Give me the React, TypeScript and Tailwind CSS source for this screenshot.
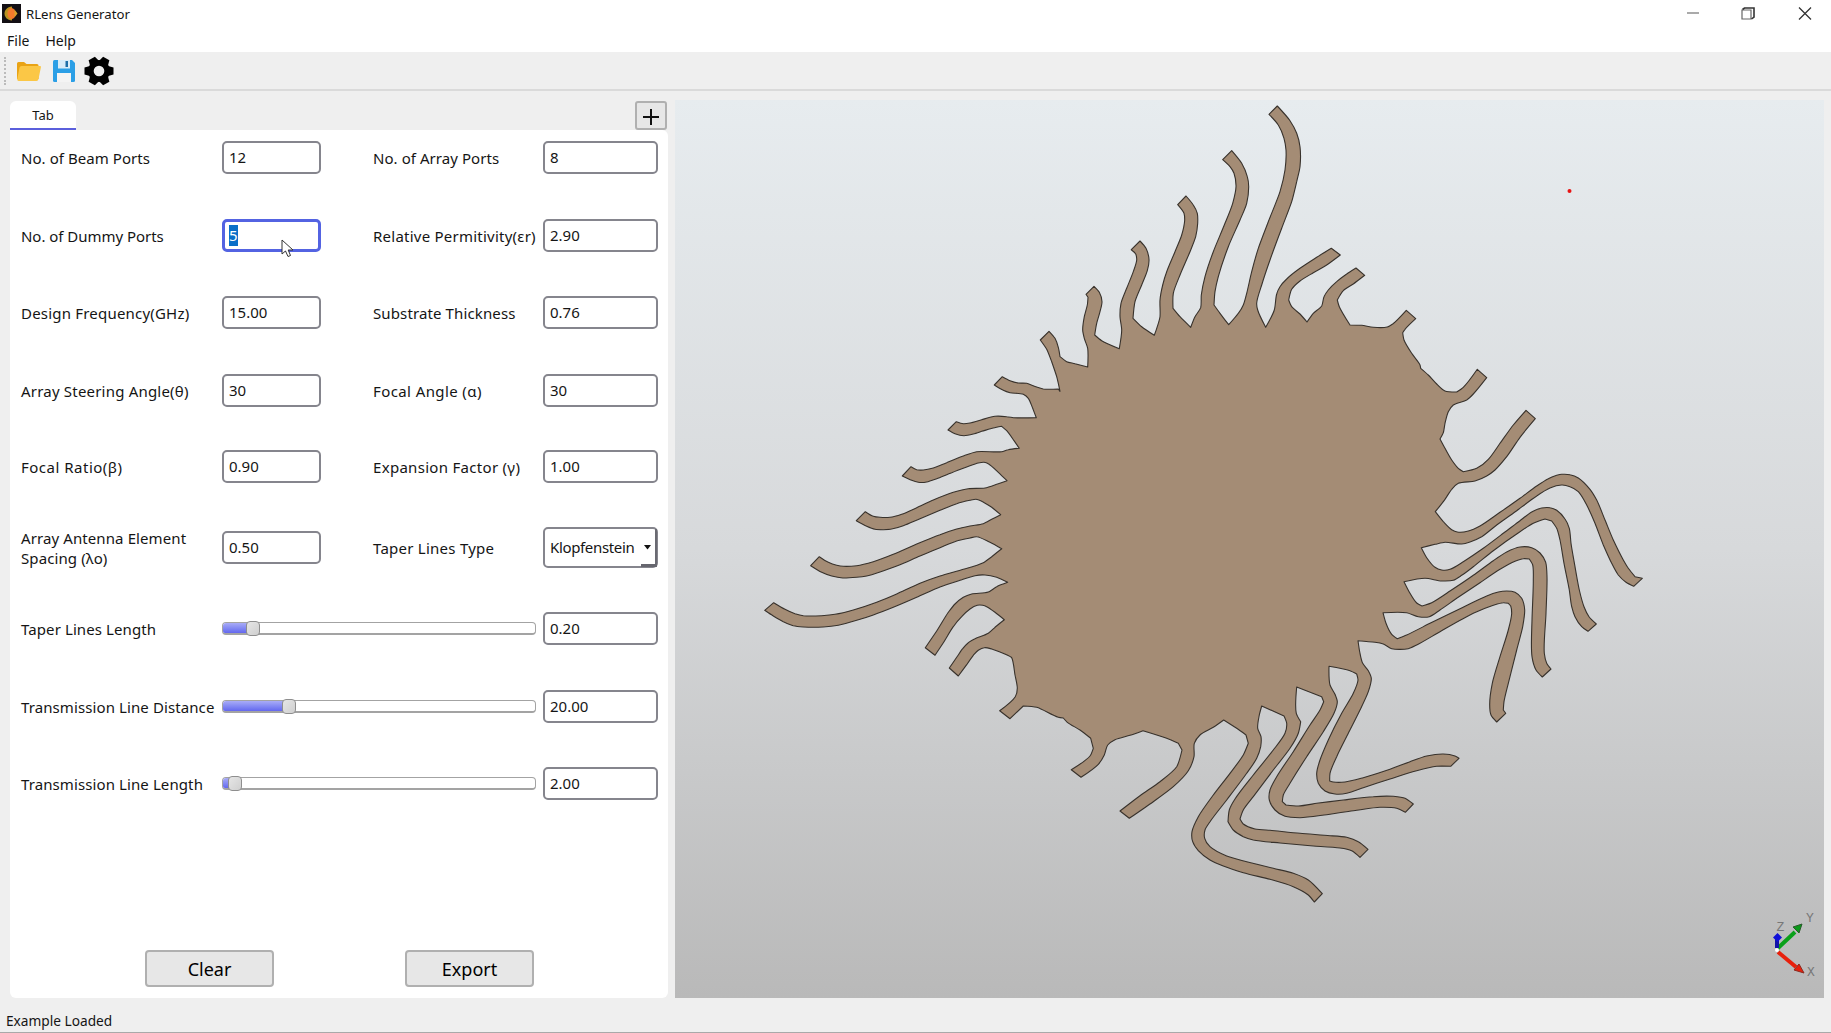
import React from "react";

type Pt = [number, number];

/** Outline chunks of the lens, digitised at a third of a pixel from a local origin. */
const chunks: { origin: Pt; pts: string }[] = [
  {
    origin: [740, 220],
    pts: `814,1312 780,1296 755,1287 733,1283 715,1291 700,1306 680,1334 655,1368 628,1344 650,1312 668,1286 685,1268 705,1256 745,1240 765,1222 793,1199
    765,1177 740,1160 728,1156 712,1156 690,1167 665,1190 640,1220 612,1265 585,1306 556,1283 590,1233 625,1177 645,1152 670,1132 695,1122 745,1116 770,1100 803,1087
    770,1072 735,1065 705,1067 660,1081 600,1101 530,1132 460,1162 400,1185 350,1201 295,1216 250,1221 190,1221 160,1217 130,1205 100,1188 74,1171 101,1148
    135,1168 165,1181 190,1187 245,1187 285,1183 340,1170 410,1147 470,1122 540,1090 600,1068 670,1048 730,1028 755,1010 785,986
    750,967 710,950 690,954 650,963 600,983 540,1008 480,1034 420,1056 380,1068 350,1072 308,1074 275,1068 245,1057 212,1037 238,1010
    265,1027 290,1036 310,1039 350,1037 400,1025 460,1003 530,972 600,944 650,927 690,918 730,911 755,898 782,884
    755,862 722,842 708,838 690,841 650,851 600,871 540,896 490,917 455,927 430,929 405,928 380,919 349,902 376,875
    400,889 420,892 450,892 485,883 530,863 580,840 640,817 685,806 735,804 770,793 801,782
    775,757 745,731 732,727 715,729 680,741 635,758 590,776 560,786 535,787 515,781 487,768 513,740
    530,749 550,750 580,744 620,728 670,708 710,695 785,695 805,689 838,685
    822,662 800,632 785,619 760,624 725,634 700,642 672,647 645,641 624,630 649,605
    670,611 690,609 725,599 765,589 800,590 820,593 889,593
    878,565 865,535 850,523 810,518 790,511 763,495 787,470 810,482 835,489 860,490 890,501 910,507 955,507 960,514
    950,470 935,425 920,388 901,360 927,334 945,355 955,382 960,410 980,425 1005,431 1043,441
    1043,385 1033,355 1028,330 1033,290 1042,255 1044,232 1038,223 1062,199 1078,217 1086,245 1080,275 1070,310 1064,345 1085,362 1138,386
    1145,330 1140,290 1143,250 1160,205 1180,155 1190,120 1187,102 1174,89 1200,63 1218,85 1227,118 1222,152 1205,195 1185,245 1179,295 1205,320 1243,346`,
  },
  {
    origin: [1100, 90],
    pts: `172,710 180,680 180,630 188,585 200,545 225,485 245,435 254,390 252,370 233,344 258,318 280,345 292,370 293,400 287,440 270,485 240,555 220,610 219,655 240,680 272,712
    285,680 302,653 304,615 315,560 340,485 375,400 398,340 408,290 402,250 390,230 368,209 395,182 425,220 442,260 446,290 440,340 420,390 385,470 355,560 345,605 342,645 360,670 386,704
    415,670 430,645 440,610 455,545 475,475 505,395 540,305 555,240 558,180 552,145 535,105 507,73 532,48 570,92 590,130 600,170 600,230 590,275 575,335 545,415 510,510 485,585 470,640 473,660 497,712
    523,660 530,612 540,590 560,567 600,535 650,502 694,475 721,495 680,525 640,548 600,573 575,598 566,630 575,650 600,672 621,696
    640,670 665,648 672,620 685,600 710,575 740,552 768,534 794,556 760,582 730,602 712,630 718,650 750,705
    785,706 820,712 862,711 878,702 919,661 947,686 915,718 908,728 912,750 935,790 960,825 962,835 985,855 1010,882 1035,903 1070,906 1090,892 1132,838 1160,863
    1120,912 1100,930 1060,945 1045,965 1035,1000 1030,1028 1020,1047`,
  },
  {
    origin: [1360, 380],
    pts: `255,205 275,240 295,265 310,275 350,265 385,238 420,190 460,135 498,91 526,116 480,172 440,230 405,270 380,288 345,303 295,310 275,328 255,358 226,395
    250,425 275,449 292,456 325,453 360,438 420,397 480,355 530,318 565,296 590,286 605,283 630,284 655,294 690,328 710,360 735,420 760,480 790,540 805,565 825,590 847,595 821,619
    798,607 775,585 755,550 730,495 705,430 680,375 655,335 630,320 605,315 570,324 530,348 470,392 410,435 365,470 330,486 305,492 255,487 225,493 184,503
    200,533 225,562 245,570 270,568 310,545 370,505 430,460 480,422 515,396 545,384 570,383 590,391 615,417 628,445 633,490 645,560 658,630 672,680 687,710 709,732 684,754
    665,740 645,710 635,680 628,630 612,550 600,480 590,445 575,423 555,417 520,430 470,462 400,512 340,560 305,586 280,601 245,603 195,595 132,605
    150,640 170,669 186,678 215,668 270,633 340,586 400,542 440,516 480,501 515,503 540,519 557,547 561,590 558,700 553,820 560,850 573,867 547,891
    528,870 516,830 516,720 520,600 518,555 508,537 490,536 465,544 420,568 360,608 290,655 240,690 208,710 175,710 140,698 69,698
    78,730 95,763 112,776 140,765 210,730 300,686 380,648 415,636 440,633 465,637 485,655 494,690 488,740 470,810 445,910 432,965 430,990 437,1000 410,1026
    393,1005 389,975 397,910 420,830 445,750 455,700 452,678 445,670 430,668 400,676 340,700 240,755 170,795 145,806 95,806 70,792 45,787`,
  },
  {
    origin: [980, 600],
    pts: `1134,122 1140,160 1148,190 1165,212 1174,235 1165,275 1140,330 1105,400 1070,470 1050,520 1049,543 1060,546 1095,546 1150,533 1230,508 1290,485 1340,468 1390,462 1425,468 1437,475 1412,499
    1370,499 1310,512 1230,537 1150,563 1100,580 1065,582 1035,573 1015,550 1010,520 1020,480 1045,420 1085,340 1120,280 1134,240 1130,222 1110,212 1047,199
    1050,255 1065,283 1072,305 1062,340 1030,395 980,470 930,550 910,585 907,605 918,615 955,618 1010,610 1090,600 1180,590 1240,589 1275,595 1300,612 1276,637
    1250,625 1200,622 1130,631 1040,644 960,653 915,649 885,630 868,600 870,570 890,530 940,455 990,375 1020,330 1031,305 1025,290 950,261
    949,340 962,365 955,400 930,445 880,510 820,590 790,630 780,657 790,672 825,687 870,691 960,700 1050,707 1100,712 1135,725 1164,748 1140,772
    1115,752 1080,744 1000,738 900,729 820,720 790,710 760,690 744,665 748,630 765,597 820,525 880,450 915,400 920,370 912,348 845,318
    838,345 833,385 843,410 842,440 830,475 800,520 740,600 690,665 675,690 674,715 690,740 740,768 800,785 880,805 940,820 985,840 1027,881 1003,906
    985,885 940,860 870,838 790,818 730,798 690,780 655,752 638,725 636,695 655,650 700,585 750,520 790,465 805,430 798,405 770,385 731,360
    700,382 660,405 643,430 642,470 625,512 580,560 520,605 448,655 420,633 480,587 540,545 590,500 606,450 595,430 560,415 489,392
    450,406 405,419 383,435 373,465 355,493 303,532 274,509 330,468 340,445 332,415 300,390 262,367 250,354 235,352
    170,322 130,318 90,356 59,332 106,290 112,265 105,225 95,173`,
  },
];

const VIEW_X = 675;
const VIEW_Y = 100;

/** Closed curve through the points; vertices that turn sharply stay corners. */
function lensPath(): string {
  const pts: Pt[] = chunks.flatMap((c) =>
    c.pts
      .trim()
      .split(/\s+/)
      .map((p) => {
        const [x, y] = p.split(",").map(Number);
        return [c.origin[0] + x / 3 - VIEW_X, c.origin[1] + y / 3 - VIEW_Y] as Pt;
      }),
  );
  const n = pts.length;
  const tangents: Pt[] = pts.map((p, i) => {
    const a = pts[(i + n - 1) % n];
    const b = pts[(i + 1) % n];
    const ux = p[0] - a[0];
    const uy = p[1] - a[1];
    const vx = b[0] - p[0];
    const vy = b[1] - p[1];
    const lu = Math.hypot(ux, uy);
    const lv = Math.hypot(vx, vy);
    if ((ux * vx + uy * vy) / (lu * lv) < 0.8) return [0, 0];
    const tx = ux / lu + vx / lv;
    const ty = uy / lu + vy / lv;
    const l = Math.hypot(tx, ty);
    return [tx / l, ty / l];
  });
  const f = (v: number) => v.toFixed(1);
  let d = `M${f(pts[0][0])} ${f(pts[0][1])}`;
  for (let i = 0; i < n; i++) {
    const j = (i + 1) % n;
    const k = Math.hypot(pts[j][0] - pts[i][0], pts[j][1] - pts[i][1]) / 4;
    d += `C${f(pts[i][0] + tangents[i][0] * k)} ${f(pts[i][1] + tangents[i][1] * k)} ${f(pts[j][0] - tangents[j][0] * k)} ${f(pts[j][1] - tangents[j][1] * k)} ${f(pts[j][0])} ${f(pts[j][1])}`;
  }
  return d + "Z";
}

function Field({ value, wide, active }: { value: string; wide?: boolean; active?: boolean }) {
  return (
    <div
      className={`flex h-[33px] items-center rounded-[5px] bg-white ${wide ? "w-[115px]" : "w-[99px]"} ${
        active ? "border-[3px] border-[#5363e2] pl-[4px]" : "border-2 border-[#85858d] pl-[5px]"
      }`}
    >
      {active ? <span className="bg-[#0a6fc8] leading-[21px] text-white">{value}</span> : value}
    </div>
  );
}

function Label({ text, tracking = "" }: { text: string; tracking?: string }) {
  return <div className={`flex h-[33px] items-center whitespace-pre leading-[20px] ${tracking}`}>{text}</div>;
}

function Slider({ at }: { at: number }) {
  return (
    <div className="relative flex h-[33px] w-[314px] items-center">
      <div className="flex h-[13px] w-full overflow-hidden rounded-[4px] border border-b-2 border-[#a3a3a3] bg-white">
        <div className="h-full bg-linear-to-b from-[#a9abf6] to-[#6467ee]" style={{ width: at + 4 }} />
      </div>
      <div
        className="absolute top-[9px] h-[15px] w-[14px] rounded-[4px] border border-[#8e8e8e] bg-linear-to-br from-[#e6e6e6] to-[#cfcfcf]"
        style={{ left: at }}
      />
    </div>
  );
}

function PushButton({ text }: { text: string }) {
  return (
    <div className="flex h-[37px] w-[129px] items-center justify-center rounded-[4px] border-2 border-[#b0b0b0] bg-[#e7e7e7] pt-[2px]">
      {text}
    </div>
  );
}

type Cell = [label: string, tracking: string, value: string];

const rows: [Cell, Cell][] = [
  [["No. of Beam Ports", "tracking-[0.06px]", "12"], ["No. of Array Ports", "tracking-[0.06px]", "8"]],
  [["No. of Dummy Ports", "tracking-[-0.03px]", "5"], ["Relative Permitivity(εr)", "tracking-[0.24px]", "2.90"]],
  [["Design Frequency(GHz)", "tracking-[0.2px]", "15.00"], ["Substrate Thickness", "tracking-[0.12px]", "0.76"]],
  [["Array Steering Angle(θ)", "tracking-[0.2px]", "30"], ["Focal Angle (ɑ)", "tracking-[0.4px]", "30"]],
  [["Focal Ratio(β)", "tracking-[0.5px]", "0.90"], ["Expansion Factor (γ)", "tracking-[0.3px]", "1.00"]],
];

const sliders: [string, number, string][] = [
  ["Taper Lines Length", 24, "0.20"],
  ["Transmission Line Distance", 60, "20.00"],
  ["Transmission Line Length", 6, "2.00"],
];

function TitleBar() {
  return (
    <div className="flex h-[27px] items-center bg-white pl-[2px]">
      <svg width="19" height="19" viewBox="0 0 19 19">
        <rect width="19" height="19" fill="#130f14" />
        <path d="M10 2.500C5 3 2.500 6 2.500 9.500S5 16 10 16.500z" fill="#b8931f" />
        <ellipse cx="9.500" cy="9.500" rx="4" ry="5.500" fill="#f47a2c" />
        <path d="M12.500 5.500l3 4-3 4z" fill="#d9a32a" />
      </svg>
      <span className="ml-[5px] pt-[2px] text-[13.2px]">RLens Generator</span>
      <svg className="ml-auto" width="150" height="27" viewBox="0 0 150 27" fill="none">
        <path d="M6 13h12" stroke="#aaa" strokeWidth="2" />
        <path d="M61 10h9v9h-9z" stroke="#666" strokeWidth="1.200" />
        <path d="M61.500 9.500L63.500 8H73v9l-2.500 2" stroke="#333" strokeWidth="1.600" />
        <path d="M118 7.500l12 12m0-12l-12 12" stroke="#333" strokeWidth="1.300" />
      </svg>
    </div>
  );
}

function Toolbar() {
  return (
    <div className="flex h-[39px] items-center border-b-2 border-[#dadada] bg-[#efefef] pt-[1px] pl-[4px]">
      <div className="h-[28px] w-0 border-l-2 border-dotted border-[#bbb]" />
      <svg className="ml-[11px]" width="24" height="21" viewBox="0 0 24 21">
        <path d="M0 2.500Q0 1 1.500 1H7l2.500 2H20q1.500 0 1.500 1.500V18H0z" fill="#e9a315" />
        <path d="M2.500 6.500Q3 5 4.500 5H23q1.200 0 .9 1.300L21.500 18q-.4 2-2 2H1.500Q0 20 .3 18z" fill="#fbc746" />
      </svg>
      <svg className="ml-[12px]" width="22" height="22" viewBox="0 0 22 22">
        <path d="M0 1.500Q0 0 1.500 0H19l3 3v17.500q0 1.500-1.500 1.500h-19Q0 22 0 20.500z" fill="#2b9fe6" />
        <path d="M5 0h12v8.500H5z" fill="#d8ecf8" />
        <path d="M12.500 1H15v6h-2.500z" fill="#1d6fa8" />
        <path d="M4 13h14v9H4z" fill="#f4f4f4" />
      </svg>
      <svg className="ml-[9px]" width="30" height="30" viewBox="-15 -15 30 30">
        <g fill="#000">
          {[30, 90, 150].map((a) => (
            <path key={a} d="M-4.800 -10L-3.600 -14.500H3.600L4.800 -10V10L3.600 14.500H-3.600L-4.800 10z" transform={`rotate(${a})`} />
          ))}
          <circle r="11" />
        </g>
        <circle r="5.300" fill="#efefef" />
      </svg>
    </div>
  );
}

function Triad() {
  return (
    <g fontFamily="Liberation Mono" fontSize="13" fill="#777">
      <path d="M1102 849l18-17" stroke="#0aa01a" strokeWidth="4" />
      <path d="M1127 824l-3 9-6-6z" fill="#0a9a1a" stroke="#2a5a2a" />
      <path d="M1103 852l18 15" stroke="#e8200c" strokeWidth="4" />
      <path d="M1129 873l-10-3 5-6z" fill="#e8200c" stroke="#8a2a20" />
      <path d="M1102 848v-9" stroke="#1414a8" strokeWidth="4" />
      <path d="M1102.500 833l4.500 4.500-4.500 4.500-4.500-4.500z" fill="#1010d8" />
      <circle cx="1102" cy="850" r="2" fill="#fff" />
      <text x="1131" y="822">Y</text>
      <text x="1101.500" y="831">Z</text>
      <text x="1132" y="876">X</text>
    </g>
  );
}

export default function App() {
  return (
    <div className="relative flex h-[1033px] w-[1831px] flex-col overflow-hidden bg-[#efefef] font-['Noto_Sans',sans-serif] text-[15px] text-[#151515]">
      <TitleBar />
      <div className="flex h-[25px] items-center gap-[16px] bg-white pt-[2px] pl-[7px] text-[14px]">
        <span>File</span>
        <span>Help</span>
      </div>
      <Toolbar />
      <div className="flex h-[907px]">
        <div className="ml-[10px] w-[658px] pt-[10px]">
          <div className="flex h-[29px] items-end justify-between pr-[1px]">
            <div className="flex h-[29px] w-[66px] items-center justify-center rounded-t-[6px] border-b-2 border-[#5b5fdc] bg-white pt-[2px] text-[13px]">
              Tab
            </div>
            <div className="flex h-[29px] w-[32px] items-center justify-center rounded-[3px] border-2 border-[#b0b0b0] bg-[#e7e7e7]">
              <svg className="mt-[2px]" width="16" height="16" viewBox="0 0 16 16">
                <path d="M8 0v16M0 8h16" stroke="#111" strokeWidth="2" />
              </svg>
            </div>
          </div>
          <div className="flex h-[868px] flex-col rounded-b-[6px] rounded-tr-[6px] bg-white pt-[11px] pl-[11px]">
            <div className="grid h-[809px] grid-cols-[201px_151px_170px_115px] grid-rows-[78px_77px_78px_76px_81px_81px_78px_77px_auto] items-start">
              {rows.map(([left, right]) => (
                <React.Fragment key={left[0]}>
                  <Label text={left[0]} tracking={left[1]} />
                  <Field value={left[2]} active={left[2] === "5"} />
                  <Label text={right[0]} tracking={right[1]} />
                  <Field value={right[2]} wide />
                </React.Fragment>
              ))}
              <Label text={"Array Antenna Element\nSpacing (λo)"} tracking="tracking-[0.1px]" />
              <Field value="0.50" />
              <Label text="Taper Lines Type" tracking="tracking-[0.25px]" />
              <div className="relative -mt-1 flex h-[41px] items-center justify-between rounded-[5px] border-2 border-[#85858d] bg-white pr-[5px] pl-[5px]">
                <span className="tracking-[-0.35px]">Klopfenstein</span>
                <svg width="7" height="5" viewBox="0 0 7 5">
                  <path d="M0 0h7L3.500 4.500z" fill="#111" />
                </svg>
                <div className="absolute top-0 right-[-1px] h-[38px] w-[2px] bg-[#6a6a72]" />
                <div className="absolute right-0 bottom-[-1px] h-[3px] w-[15px] bg-[#66666e]" />
              </div>
              {sliders.map(([label, at, v]) => (
                <React.Fragment key={label}>
                  <Label text={label} tracking="tracking-[0.1px]" />
                  <div className="col-span-2">
                    <Slider at={at} />
                  </div>
                  <Field value={v} wide />
                </React.Fragment>
              ))}
            </div>
            <div className="flex gap-[131px] pl-[124px] text-[18px] text-black">
              <PushButton text="Clear" />
              <PushButton text="Export" />
            </div>
          </div>
        </div>
        <div className="mt-[9px] ml-[7px] h-[898px] w-[1149px] bg-linear-to-b from-[#e7ecef] via-[#d7d9db] to-[#b9b9b9]">
          <svg width="1149" height="898" viewBox="0 0 1149 898">
            <path d={lensPath()} fill="#a48c75" stroke="#38322c" strokeWidth="1.100" strokeLinejoin="round" />
            <circle cx="894.500" cy="91" r="2" fill="#e81414" />
            <Triad />
          </svg>
        </div>
      </div>
      <div className="flex h-[35px] items-center border-b border-[#a9a9a9] pt-[12px] pl-[6px] text-[13.7px]">Example Loaded</div>
      <svg className="absolute top-[239px] left-[281px]" width="14" height="19" viewBox="0 0 14 19">
        <path d="M1 1v14l3.500-3 2.500 5.500 2.500-1L7.200 11H12z" fill="#fff" stroke="#333" />
      </svg>
    </div>
  );
}
